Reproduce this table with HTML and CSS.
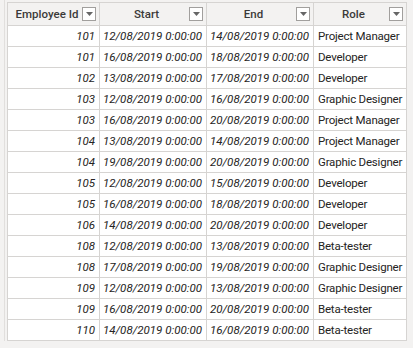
FILE: index.html
```html
<!DOCTYPE html>
<html>
<head>
<meta charset="utf-8">
<link rel="stylesheet" href="styles.css">
</head>
<body>
<div class="frame">
<table class="grid">
<colgroup><col class="c1"><col class="c2"><col class="c3"><col class="c4"></colgroup>
<thead>
<tr>
<th><div class="hd"><span class="ht">Employee Id</span><span class="flt"><svg width="7" height="4" viewBox="0 0 7 4"><path d="M0 0h7L3.5 4z" fill="#666"/></svg></span></div></th>
<th><div class="hd"><span class="ht">Start</span><span class="flt"><svg width="7" height="4" viewBox="0 0 7 4"><path d="M0 0h7L3.5 4z" fill="#666"/></svg></span></div></th>
<th><div class="hd"><span class="ht">End</span><span class="flt"><svg width="7" height="4" viewBox="0 0 7 4"><path d="M0 0h7L3.5 4z" fill="#666"/></svg></span></div></th>
<th><div class="hd"><span class="ht">Role</span><span class="flt"><svg width="7" height="4" viewBox="0 0 7 4"><path d="M0 0h7L3.5 4z" fill="#666"/></svg></span></div></th>
</tr>
</thead>
<tbody>
<tr><td class="num">101</td><td class="dt">12/08/2019 0:00:00</td><td class="dt">14/08/2019 0:00:00</td><td class="txt">Project Manager</td></tr>
<tr><td class="num">101</td><td class="dt">16/08/2019 0:00:00</td><td class="dt">18/08/2019 0:00:00</td><td class="txt">Developer</td></tr>
<tr><td class="num">102</td><td class="dt">13/08/2019 0:00:00</td><td class="dt">17/08/2019 0:00:00</td><td class="txt">Developer</td></tr>
<tr><td class="num">103</td><td class="dt">12/08/2019 0:00:00</td><td class="dt">16/08/2019 0:00:00</td><td class="txt">Graphic Designer</td></tr>
<tr><td class="num">103</td><td class="dt">16/08/2019 0:00:00</td><td class="dt">20/08/2019 0:00:00</td><td class="txt">Project Manager</td></tr>
<tr><td class="num">104</td><td class="dt">13/08/2019 0:00:00</td><td class="dt">14/08/2019 0:00:00</td><td class="txt">Project Manager</td></tr>
<tr><td class="num">104</td><td class="dt">19/08/2019 0:00:00</td><td class="dt">20/08/2019 0:00:00</td><td class="txt">Graphic Designer</td></tr>
<tr><td class="num">105</td><td class="dt">12/08/2019 0:00:00</td><td class="dt">15/08/2019 0:00:00</td><td class="txt">Developer</td></tr>
<tr><td class="num">105</td><td class="dt">16/08/2019 0:00:00</td><td class="dt">18/08/2019 0:00:00</td><td class="txt">Developer</td></tr>
<tr><td class="num">106</td><td class="dt">14/08/2019 0:00:00</td><td class="dt">20/08/2019 0:00:00</td><td class="txt">Developer</td></tr>
<tr><td class="num">108</td><td class="dt">12/08/2019 0:00:00</td><td class="dt">13/08/2019 0:00:00</td><td class="txt">Beta-tester</td></tr>
<tr><td class="num">108</td><td class="dt">17/08/2019 0:00:00</td><td class="dt">19/08/2019 0:00:00</td><td class="txt">Graphic Designer</td></tr>
<tr><td class="num">109</td><td class="dt">12/08/2019 0:00:00</td><td class="dt">13/08/2019 0:00:00</td><td class="txt">Graphic Designer</td></tr>
<tr><td class="num">109</td><td class="dt">16/08/2019 0:00:00</td><td class="dt">20/08/2019 0:00:00</td><td class="txt">Beta-tester</td></tr>
<tr><td class="num">110</td><td class="dt">14/08/2019 0:00:00</td><td class="dt">16/08/2019 0:00:00</td><td class="txt">Beta-tester</td></tr>
</tbody>
</table>
</div>
</body>
</html>
```
FILE: styles.css
```css
html, body {
  margin: 0;
  padding: 0;
  background: #f3f2f1;
}
body {
  width: 413px;
  height: 348px;
  overflow: hidden;
  font-family: Roboto, "Noto Sans", sans-serif;
  font-size: 11.5px;
  color: #252423;
}
.frame {
  margin-left: 4px;
  padding: 2px 0 0 2px;
  border-left: 1px solid #e1dfdd;
  width: 401px;
}
.grid {
  border-collapse: collapse;
  table-layout: fixed;
  width: 399px;
  background: #fff;
}
.c1 { width: 92px; }
.c2 { width: 107px; }
.c3 { width: 107px; }
.c4 { width: 93px; }
.grid th, .grid td {
  border: 1px solid #d6d4d2;
  padding: 0;
  white-space: nowrap;
  overflow: hidden;
  box-sizing: border-box;
}
.grid th {
  height: 23px;
  background: #f3f2f1;
  font-weight: 500;
  color: #3b3a39;
}
.hd {
  display: flex;
  align-items: center;
  padding: 0 3px 0 4px;
}
.ht {
  flex: 1;
  text-align: center;
}
.flt {
  width: 12px;
  height: 12px;
  border: 1px solid #a19f9d;
  background: #fff;
  display: flex;
  align-items: center;
  justify-content: center;
}
.grid td {
  height: 21px;
}
.num, .dt {
  text-align: right;
  font-style: italic;
  padding-right: 4px !important;
}
.txt {
  text-align: left;
  padding-left: 4px !important;
  letter-spacing: -0.2px;
}
```
